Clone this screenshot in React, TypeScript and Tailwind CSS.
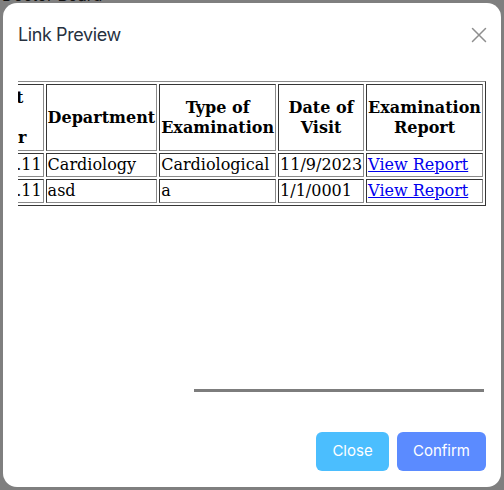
import React from 'react';

interface VisitRow {
  id: number;
  patient: string;
  doctor: string;
  cost: string;
  department: string;
  examType: string;
  date: string;
}

const visits: VisitRow[] = [
  { id: 1, patient: 'Ahmed Ali', doctor: 'Dr. Sami', cost: '10000.11', department: 'Cardiology', examType: 'Cardiological', date: '11/9/2023' },
  { id: 2, patient: 'asd', doctor: 'asd', cost: '10000.11', department: 'asd', examType: 'a', date: '1/1/0001' },
];

const cell = 'border border-[#8a8a8a] [border-style:inset] p-px';
const head = `${cell} font-bold text-center align-middle`;

function CloseIcon() {
  return (
    <svg width="16" height="16" viewBox="0 0 16 16" fill="none" stroke="#8e8e8e" strokeWidth="1.5" strokeLinecap="round">
      <path d="M1.5 1.5 L14.5 14.5 M14.5 1.5 L1.5 14.5" />
    </svg>
  );
}

export default function App() {
  return (
    <div className="relative w-[504px] h-[490px] overflow-hidden bg-white font-['Inter',sans-serif]">
      {/* page behind the dialog */}
      <div className="-mt-[14px] pl-[2px] text-[16px] leading-[18px] text-[#222]">Doctor Board</div>
      <div className="absolute inset-0 bg-black/50" />

      <div className="absolute left-[3px] top-[3px] w-[498px] h-[484px] bg-white rounded-[14px] flex flex-col">
        <div className="flex items-center justify-between pl-[15px] pr-[14px] pt-[20px]">
          <h2 className="text-[18px] leading-[24px] tracking-[-0.4px] text-[#27313f]">Link Preview</h2>
          <button className="w-4 h-4 flex items-center justify-center">
            <CloseIcon />
          </button>
        </div>

        <div className="relative mx-[15px] mt-[34px] h-[313px] overflow-hidden flex justify-end items-start">
          <table className="shrink-0 border-separate border-spacing-[2px] border border-[#8a8a8a] [border-style:outset] font-['DejaVu_Serif',serif] text-[16px] leading-[20px] text-black">
            <thead>
              <tr className="h-[67px]">
                <th className={head}>No.</th>
                <th className={head}>Patient<br />Name</th>
                <th className={head}>Doctor<br />Name</th>
                <th className={head}>Cost<br />of<br />Hour</th>
                <th className={head}>Department</th>
                <th className={head}>Type of<br />Examination</th>
                <th className={head}>Date of<br />Visit</th>
                <th className={head}>Examination<br />Report</th>
              </tr>
            </thead>
            <tbody>
              {visits.map((v) => (
                <tr key={v.id} className="h-[24px]">
                  <td className={cell}>{v.id}</td>
                  <td className={cell}>{v.patient}</td>
                  <td className={cell}>{v.doctor}</td>
                  <td className={cell}>{v.cost}</td>
                  <td className={cell}>{v.department}</td>
                  <td className={cell}>{v.examType}</td>
                  <td className={cell}>{v.date}</td>
                  <td className={cell}>
                    <a href="#" className="text-[#0000ee] underline">View Report</a>
                  </td>
                </tr>
              ))}
            </tbody>
          </table>
          <div className="absolute bottom-[2px] right-[2px] w-[290px] h-[3px] bg-[#7d7d7d]" />
        </div>

        <div className="flex justify-end gap-2 px-[15px] mt-[38px]">
          <button className="w-[73px] h-[39px] rounded-md bg-[#4bbefe] text-white text-[15px]">Close</button>
          <button className="w-[89px] h-[39px] rounded-md bg-[#5b8bff] text-white text-[15px]">Confirm</button>
        </div>
      </div>
    </div>
  );
}
